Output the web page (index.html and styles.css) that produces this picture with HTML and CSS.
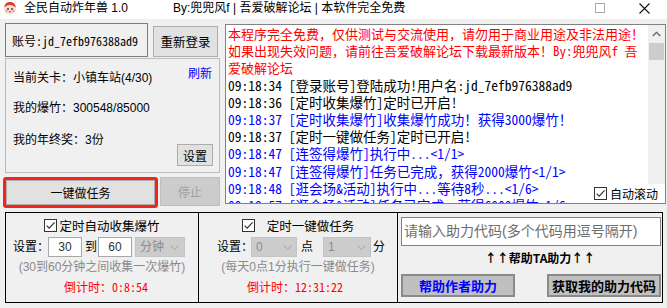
FILE: index.html
```html
<!DOCTYPE html>
<html lang="zh-CN">
<head>
  <meta charset="UTF-8">
  <title>全民自动炸年兽 1.0</title>
  <link rel="stylesheet" href="styles.css">
</head>
<body>

  <div class="titlebar">
    <svg class="app-icon" viewBox="0 0 14 14">
      <circle cx="7" cy="7.6" r="6" fill="#f7dcd0"/>
      <path d="M1.2 6.5 Q2 0.8 7 1 Q12 0.8 12.8 6.5 Q10 3.6 7 4 Q4 3.6 1.2 6.5Z" fill="#d8402e"/>
      <circle cx="5" cy="8" r="0.9" fill="#333"/>
      <circle cx="9" cy="8" r="0.9" fill="#333"/>
      <circle cx="3.4" cy="10" r="1" fill="#f08a8a"/>
      <circle cx="10.6" cy="10" r="1" fill="#f08a8a"/>
      <ellipse cx="7" cy="10.8" rx="1.2" ry="0.8" fill="#d8402e"/>
    </svg>
    <span class="title">全民自动炸年兽 1.0</span>
    <span class="author">By:兜兜风f | 吾爱破解论坛 | 本软件完全免费</span>
    <span class="win-btn">
      <svg width="10" height="10" viewBox="0 0 10 10"><rect x="0.5" y="0.5" width="9" height="9" fill="none" stroke="#a8a8a8"/></svg>
    </span>
    <span class="win-btn">
      <svg width="11" height="11" viewBox="0 0 11 11"><path d="M0.5 0.5 L10.5 10.5 M10.5 0.5 L0.5 10.5" stroke="#111" stroke-width="1.1"/></svg>
    </span>
  </div>

  <div class="client">
    <div class="top">
      <div class="side">
        <div class="account-row">
          <div class="account">账号:jd_7efb976388ad9</div>
          <button class="btn relogin">重新登录</button>
        </div>

        <div class="info">
          <div class="info-row">
            <span>当前关卡：小镇车站(4/30)</span>
            <a class="refresh">刷新</a>
          </div>
          <div class="info-row gap1">我的爆竹：300548/85000</div>
          <div class="info-row gap2">
            <span>我的年终奖：3份</span>
            <button class="btn settings">设置</button>
          </div>
        </div>

        <div class="action-row">
          <div class="highlight">
            <button class="btn run">一键做任务</button>
          </div>
          <button class="btn stop" disabled>停止</button>
        </div>
      </div>

      <div class="log">
        <div class="log-text">
          <div class="notice">本程序完全免费，仅供测试与交流使用，请勿用于商业用途及非法用途！</div>
          <div class="notice">如果出现失效问题，请前往吾爱破解论坛下载最新版本！By:兜兜风f 吾</div>
          <div class="notice">爱破解论坛</div>
          <div class="entry">09:18:34 [登录账号]登陆成功!用户名:jd_7efb976388ad9</div>
          <div class="entry">09:18:36 [定时收集爆竹]定时已开启!</div>
          <div class="entry ok">09:18:37 [定时收集爆竹]收集爆竹成功！获得3000爆竹！</div>
          <div class="entry">09:18:37 [定时一键做任务]定时已开启!</div>
          <div class="entry ok">09:18:47 [连签得爆竹]执行中...&lt;1/1&gt;</div>
          <div class="entry ok">09:18:47 [连签得爆竹]任务已完成，获得2000爆竹&lt;1/1&gt;</div>
          <div class="entry ok">09:18:48 [逛会场&amp;活动]执行中...等待8秒...&lt;1/6&gt;</div>
          <div class="entry ok">09:18:57 [逛会场&amp;活动]任务已完成，获得6000爆竹&lt;1/6&gt;</div>
        </div>
        <div class="scrollbar">
          <div class="arrow">
            <svg width="9" height="6" viewBox="0 0 9 6"><path d="M0.8 5 L4.5 1.3 L8.2 5" fill="none" stroke="#606060" stroke-width="1.3"/></svg>
          </div>
          <div class="thumb"></div>
        </div>
        <label class="auto-scroll">
          <svg class="check" viewBox="0 0 13 13"><rect x="0.5" y="0.5" width="12" height="12" fill="#fff" stroke="#333"/><path d="M2.6 6.6 L5.2 9.2 L10.6 3.4" fill="none" stroke="#333" stroke-width="1.2"/></svg>
          <span>自动滚动</span>
        </label>
      </div>
    </div>

    <div class="bottom">
      <!-- 定时收集 -->
      <div class="cell cell-collect">
        <div class="chk-row">
          <svg class="check" viewBox="0 0 13 13"><rect x="0.5" y="0.5" width="12" height="12" fill="#fff" stroke="#333"/><path d="M2.6 6.6 L5.2 9.2 L10.6 3.4" fill="none" stroke="#333" stroke-width="1.2"/></svg>
          <span>定时自动收集爆竹</span>
        </div>
        <div class="set-row">
          <span class="label">设置：</span>
          <div class="num">30</div>
          <span class="to">到</span>
          <div class="num">60</div>
          <div class="select unit">
            <span>分钟</span>
            <svg width="9" height="5" viewBox="0 0 9 5"><path d="M0.5 0.5 L4.5 4.3 L8.5 0.5" fill="none" stroke="#a4a4a4"/></svg>
          </div>
        </div>
        <div class="hint">(30到60分钟之间收集一次爆竹)</div>
        <div class="count">倒计时：0:8:54</div>
      </div>

      <!-- 定时任务 -->
      <div class="cell cell-task">
        <div class="chk-row">
          <svg class="check" viewBox="0 0 13 13"><rect x="0.5" y="0.5" width="12" height="12" fill="#fff" stroke="#333"/><path d="M2.6 6.6 L5.2 9.2 L10.6 3.4" fill="none" stroke="#333" stroke-width="1.2"/></svg>
          <span>定时一键做任务</span>
        </div>
        <div class="set-row">
          <span class="label">设置：</span>
          <div class="select hour">
            <span>0</span>
            <svg width="9" height="5" viewBox="0 0 9 5"><path d="M0.5 0.5 L4.5 4.3 L8.5 0.5" fill="none" stroke="#a4a4a4"/></svg>
          </div>
          <span class="dot">点</span>
          <div class="select minute">
            <span>1</span>
            <svg width="9" height="5" viewBox="0 0 9 5"><path d="M0.5 0.5 L4.5 4.3 L8.5 0.5" fill="none" stroke="#a4a4a4"/></svg>
          </div>
          <span class="min">分</span>
        </div>
        <div class="hint">(每天0点1分执行一键做任务)</div>
        <div class="count">倒计时：12:31:22</div>
      </div>

      <!-- 助力 -->
      <div class="cell cell-help">
        <div class="code-input">请输入助力代码(多个代码用逗号隔开)</div>
        <div class="help-title">↑↑帮助TA助力↑↑</div>
        <div class="help-buttons">
          <button class="btn help author-help">帮助作者助力</button>
          <button class="btn help">获取我的助力代码</button>
        </div>
      </div>
    </div>
  </div>

</body>
</html>
```

FILE: styles.css
```css
* {
  box-sizing: border-box;
}

body {
  margin: 0;
  width: 667px;
  height: 308px;
  overflow: hidden;
  background: #f0f0f0;
  font-family: "Liberation Sans", "Noto Sans CJK SC", sans-serif;
  font-size: 12px;
  color: #000;
}

/* title bar */
.titlebar {
  height: 19px;
  padding-bottom: 3px;
  background: #fff;
  display: flex;
  align-items: center;
  line-height: 16px;
}

.app-icon {
  width: 14px;
  height: 14px;
  margin-left: 3px;
}

.title {
  margin-left: 7px;
  width: 149px;
}

.author {
  flex: 1;
}

.win-btn {
  width: 45px;
  display: flex;
  justify-content: center;
}

/* client area */
.client {
  padding: 4px 0 0 5px;
}

.top {
  display: flex;
  gap: 5px;
  height: 185px;
}

.side {
  width: 215px;
  display: flex;
  flex-direction: column;
}

.btn {
  font-family: "Liberation Sans", "Noto Sans CJK SC", sans-serif;
  font-size: 12px;
  background: #e1e1e1;
  border: 1px solid #adadad;
  color: #000;
  padding: 0;
}

.account-row {
  display: flex;
  height: 35px;
}

.account {
  width: 143px;
  height: 34px;
  border: 1px solid #7a7a7a;
  background: #f0f0f0;
  padding: 2px 0 0 6px;
  line-height: 30px;
  font-family: "Noto Sans Mono CJK SC", "Liberation Mono", "Noto Sans CJK SC", monospace;
  white-space: nowrap;
  overflow: hidden;
}

.relogin {
  width: 65px;
  height: 31px;
  margin: 3px 0 0 5px;
  font-size: 12.5px;
}

.info {
  height: 115px;
  border: 1px solid #bcbcbc;
  padding: 9px 6px 5px 7px;
  display: flex;
  flex-direction: column;
}

.info-row {
  display: flex;
  justify-content: space-between;
  align-items: flex-start;
  line-height: 20px;
}

.info-row.gap1 {
  margin-top: 10px;
}

.info-row.gap2 {
  margin-top: 12px;
}

.refresh {
  color: #0000ff;
  margin-top: -4px;
  margin-right: 1px;
  cursor: pointer;
}

.settings {
  width: 36px;
  height: 22px;
  margin-top: 14px;
}

.action-row {
  display: flex;
  margin-top: 4px;
}

.highlight {
  width: 155px;
  height: 31px;
  margin-left: -2px;
  border: 3px solid #f5231b;
  border-radius: 3px;
}

.run {
  width: 100%;
  height: 100%;
}

.stop {
  width: 60px;
  height: 29px;
  margin-left: 2px;
  background: #cccccc;
  border-color: #bfbfbf;
  color: #a0a0a0;
}

/* log */
.log {
  position: relative;
  width: 441px;
  height: 180px;
  margin-top: 1px;
  border: 1px solid #828282;
  background: #fff;
  display: flex;
}

.log-text {
  flex: 1;
  overflow: hidden;
  padding-left: 2px;
  line-height: 17.2px;
  white-space: nowrap;
  font-family: "Noto Sans Mono CJK SC", "Liberation Mono", "Noto Sans CJK SC", monospace;
}

.notice {
  color: #ff0000;
  font-size: 13px;
}

.entry {
  font-size: 13.5px;
}

.entry.ok {
  color: #0000ff;
}

.scrollbar {
  width: 17px;
  background: #f0f0f0;
}

.arrow {
  height: 17px;
  display: flex;
  align-items: center;
  justify-content: center;
}

.thumb {
  height: 17px;
  margin: 1px 1px 0 1px;
  background: #cdcdcd;
}

.auto-scroll {
  position: absolute;
  right: 0;
  bottom: 0;
  width: 74px;
  height: 19px;
  background: #fff;
  display: flex;
  align-items: center;
  gap: 3px;
  padding-left: 3px;
}

.check {
  width: 13px;
  height: 13px;
  flex: none;
}

/* bottom panels */
.bottom {
  display: flex;
  width: 658px;
  height: 91px;
  margin-top: 4px;
  border: 1px solid #000;
}

.cell {
  display: flex;
  flex-direction: column;
}

.cell-collect {
  width: 193px;
  border-right: 1px solid #000;
}

.cell-task {
  width: 199px;
  border-right: 1px solid #000;
}

.cell-help {
  flex: 1;
}

.chk-row {
  height: 24px;
  display: flex;
  align-items: center;
  justify-content: center;
  gap: 2px;
  font-size: 12.5px;
}

.cell-task .chk-row {
  gap: 12px;
}

.set-row {
  height: 21px;
  display: flex;
  align-items: flex-start;
  line-height: 20px;
  padding-left: 7px;
  white-space: nowrap;
}

.set-row span {
  flex: none;
}

.cell-task .set-row {
  padding-left: 18px;
}

.label {
  width: 35px;
}

.cell-task .label {
  width: 34px;
}

.num {
  flex: none;
  width: 34px;
  height: 20px;
  background: #fff;
  border: 1px solid #a8a8a8;
  text-align: center;
  line-height: 18px;
  color: #333;
}

.to {
  margin: 0 1px 0 3px;
  width: 12px;
}

.select {
  flex: none;
  height: 20px;
  background: #cccccc;
  border: 1px solid #c4c4c4;
  color: #8c8c8c;
  display: flex;
  align-items: center;
  justify-content: space-between;
  padding: 0 4px 0 4px;
  line-height: 18px;
}

.select.unit {
  width: 50px;
  margin-left: 3px;
  padding-right: 5px;
}

.select.hour {
  width: 46px;
}

.select.minute {
  width: 48px;
  margin-left: 10px;
}

.dot {
  margin-left: 4px;
}

.min {
  margin-left: 2px;
}

.hint {
  height: 19px;
  line-height: 19px;
  text-align: center;
  color: #8a8a8a;
  white-space: nowrap;
}

.count {
  height: 20px;
  line-height: 20px;
  text-align: center;
  color: #ff0000;
  font-family: "Noto Sans Mono CJK SC", "Liberation Mono", "Noto Sans CJK SC", monospace;
}

.cell-collect .count {
  padding-left: 8px;
}

.cell-task .count {
  padding-right: 6px;
}

.code-input {
  height: 29px;
  margin: 4px 1px 0 3px;
  background: #fff;
  border: 1px solid #828282;
  padding-left: 2px;
  line-height: 27px;
  font-size: 14px;
  color: #6d6d6d;
  white-space: nowrap;
  overflow: hidden;
}

.help-title {
  height: 24px;
  line-height: 24px;
  text-align: center;
  padding-left: 20px;
  font-family: "Noto Sans CJK SC", sans-serif;
  font-weight: bold;
}

.help-buttons {
  display: flex;
  justify-content: space-between;
  margin-top: 4px;
  padding: 0 1px 0 3px;
}

.help {
  width: 114px;
  height: 23px;
  background: #c0c0c0;
  border: 2px solid #8a8a8a;
  font-size: 13px;
  font-weight: bold;
}

.author-help {
  color: #0000ff;
}
```
